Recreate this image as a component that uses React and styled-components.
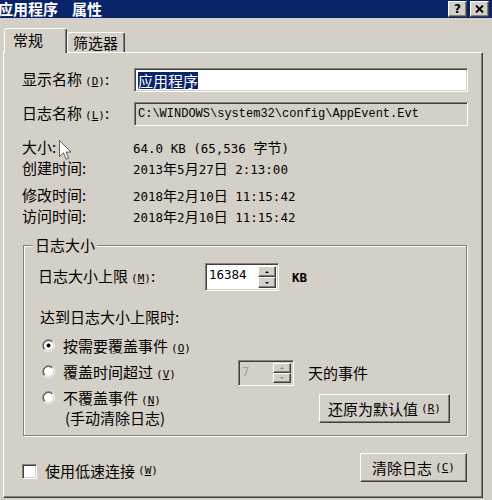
import React from 'react'
import styled, { createGlobalStyle, css } from 'styled-components'

const GlobalStyle = createGlobalStyle`
  html, body {
    margin: 0;
    padding: 0;
    background: #d4d0c8;
  }
  body {
    font-family: "Noto Sans CJK SC", sans-serif;
    font-size: 15px;
    color: #000;
  }
  * {
    box-sizing: border-box;
  }
`

const raised = css`
  border: 1px solid;
  border-color: #fff #404040 #404040 #fff;
  box-shadow: inset -1px -1px 0 #808080, inset 1px 1px 0 #d4d0c8;
  background: #d4d0c8;
`

const sunken = css`
  border: 1px solid;
  border-color: #808080 #fff #fff #808080;
  box-shadow: inset 1px 1px 0 #404040, inset -1px -1px 0 #d4d0c8;
`

const Window = styled.div`
  position: relative;
  width: 492px;
  height: 500px;
  overflow: hidden;
  background: #d4d0c8;
`

const TitleBar = styled.div`
  height: 18px;
  background: #0a246a;
  display: flex;
  align-items: center;
  justify-content: space-between;
  padding-right: 3px;
`

const Title = styled.div`
  display: flex;
  gap: 14px;
  margin-left: -2px;
  color: #fff;
  font-weight: bold;
  font-size: 15px;
  line-height: 18px;
`

const Controls = styled.div`
  display: flex;
  gap: 3px;
`

const CaptionButton = styled.div`
  ${raised}
  width: 19px;
  height: 16px;
  display: flex;
  align-items: center;
  justify-content: center;
  font: bold 12px/1 "DejaVu Sans", sans-serif;
`

const Body = styled.div`
  padding: 10px 0 0 3px;
`

const Tabs = styled.div`
  position: relative;
  z-index: 1;
  display: flex;
  align-items: flex-end;
  height: 24px;
  padding-left: 1px;
`

const Tab = styled.div`
  width: ${p => p.$w}px;
  height: ${p => (p.$active ? 25 : 20)}px;
  margin-bottom: ${p => (p.$active ? -1 : 0)}px;
  padding: ${p => (p.$active ? 1 : 0)}px 0 0 ${p => p.$pad}px;
  background: #d4d0c8;
  border: 1px solid;
  border-bottom: none;
  border-color: #fff #404040 transparent #fff;
  box-shadow: inset -1px 0 0 #808080;
  border-radius: 3px 3px 0 0;
  line-height: 20px;
`

const Panel = styled.div`
  width: 480px;
  height: 446px;
  border: 1px solid;
  border-color: #fff #404040 #404040 #fff;
  box-shadow: inset -1px -1px 0 #808080;
  padding: 15px 0 0 18px;
`

const FieldGrid = styled.div`
  display: grid;
  grid-template-columns: 112px 334px;
  grid-auto-rows: 24px;
  row-gap: 10px;
  align-items: center;
`

const Label = styled.div`
  line-height: 20px;
  white-space: nowrap;
`

const Lat = styled.span`
  font-family: "DejaVu Sans Mono", monospace;
  font-size: 11px;
  margin-left: 3px;
`

const TextBox = styled.div`
  ${sunken}
  height: 24px;
  background: ${p => (p.$readOnly ? '#d4d0c8' : '#fff')};
  padding: 0 3px;
  display: flex;
  align-items: center;
`

const Selected = styled.span`
  background: #0a246a;
  color: #fff;
  line-height: 17px;
`

const Path = styled.span`
  font-family: "Liberation Mono", monospace;
  font-size: 12px;
  line-height: 17px;
`

const InfoList = styled.div`
  margin-top: 10px;
  display: flex;
  flex-direction: column;
  gap: 6px;
`

const InfoGroup = styled.div`
  display: grid;
  grid-template-columns: 111px auto;
  grid-auto-rows: 21px;
  align-items: center;
`

const Value = styled.span`
  font-family: "DejaVu Sans Mono", "Noto Sans CJK SC", monospace;
  font-size: 12.5px;
  white-space: pre;
`

const Wide = styled.span`
  font-family: "Noto Sans CJK SC", sans-serif;
  font-size: 14px;
`

const Group = styled.div`
  position: relative;
  width: 444px;
  margin: 19px 0 0 1px;
  padding: 17px 16px 12px 14px;
  border: 1px solid #808080;
  box-shadow: inset 1px 1px 0 #fff, 1px 1px 0 #fff;
`

const GroupTitle = styled.span`
  position: absolute;
  top: -10px;
  left: 9px;
  padding: 0 2px;
  background: #d4d0c8;
  line-height: 18px;
`

const SizeRow = styled.div`
  display: flex;
  align-items: center;
  height: 28px;
`

const SizeLabel = styled.div`
  width: 167px;
  line-height: 20px;
`

const Spin = styled.div`
  ${sunken}
  display: flex;
  width: ${p => p.$w}px;
  height: ${p => p.$h}px;
  padding: 2px;
  background: ${p => (p.$disabled ? '#d4d0c8' : '#fff')};
`

const SpinText = styled.div`
  flex: 1;
  padding: 1px 0 0 1px;
  font-family: "DejaVu Sans Mono", monospace;
  font-size: 12.5px;
  line-height: 16px;
  color: ${p => (p.$disabled ? '#a0a0a0' : '#000')};
`

const SpinButtons = styled.div`
  display: flex;
  flex-direction: column;
  width: 18px;
`

const SpinButton = styled.div`
  ${raised}
  flex: 1;
  display: flex;
  align-items: center;
  justify-content: center;
`

const Arrow = styled.span`
  width: 0;
  height: 0;
  border-left: 2px solid transparent;
  border-right: 2px solid transparent;
  ${p => (p.$down ? 'border-top' : 'border-bottom')}: 2px solid ${p => (p.$disabled ? '#808080' : '#000')};
`

const Unit = styled(Value)`
  margin-left: 13px;
  font-weight: bold;
`

const Prompt = styled.div`
  margin: 16px 0 0 2px;
  line-height: 20px;
`

const RadioGrid = styled.div`
  display: grid;
  grid-template-columns: 196px 1fr;
  grid-template-rows: 20px 26px 34px;
  row-gap: 3px;
  margin-top: 10px;
  padding-left: 4px;
  align-items: center;
`

const RadioItem = styled.div`
  display: flex;
  align-items: flex-start;
  align-self: ${p => (p.$top ? 'start' : 'center')};
  line-height: 17px;

  svg {
    flex: none;
    margin: 2px 8px 0 0;
  }
`

const SubLine = styled.span`
  display: block;
  margin-left: 2px;
`

const DaysCell = styled.div`
  display: flex;
  align-items: center;
`

const DaysText = styled.span`
  margin-left: 14px;
  line-height: 20px;
`

const Button = styled.div`
  ${raised}
  width: ${p => p.$w}px;
  height: 29px;
  display: flex;
  align-items: center;
  justify-content: center;
  line-height: 20px;
  justify-self: end;
  align-self: end;
`

const BottomRow = styled.div`
  width: 445px;
  margin-top: 17px;
  display: flex;
  align-items: center;
  justify-content: space-between;
`

const CheckRow = styled.div`
  display: flex;
  align-items: center;
  margin-top: 7px;
  line-height: 20px;
`

const CheckBox = styled.span`
  ${sunken}
  width: 15px;
  height: 15px;
  margin-right: 8px;
  background: #fff;
`

const Cursor = styled.svg`
  position: absolute;
  left: 59px;
  top: 140px;
`

const Key = ({ k }) => (
  <Lat>
    (<u>{k}</u>)
  </Lat>
)

const Radio = ({ checked }) => (
  <svg width="13" height="13" viewBox="0 0 13 13">
    <circle cx="6.5" cy="6.5" r="5" fill="#fff" />
    <path d="M2.26 10.74 A6 6 0 0 1 10.74 2.26" fill="none" stroke="#808080" />
    <path d="M10.74 2.26 A6 6 0 0 1 2.26 10.74" fill="none" stroke="#fff" />
    <path d="M2.96 10.04 A5 5 0 0 1 10.04 2.96" fill="none" stroke="#404040" />
    <path d="M10.04 2.96 A5 5 0 0 1 2.96 10.04" fill="none" stroke="#d4d0c8" />
    {checked && <circle cx="6.5" cy="6.5" r="2" fill="#000" />}
  </svg>
)

const SpinBox = ({ value, w, h, disabled }) => (
  <Spin $w={w} $h={h} $disabled={disabled}>
    <SpinText $disabled={disabled}>{value}</SpinText>
    <SpinButtons>
      <SpinButton>
        <Arrow $disabled={disabled} />
      </SpinButton>
      <SpinButton>
        <Arrow $down $disabled={disabled} />
      </SpinButton>
    </SpinButtons>
  </Spin>
)

export default function App() {
  return (
    <Window>
      <GlobalStyle />
      <TitleBar>
        <Title>
          <span>应用程序</span>
          <span>属性</span>
        </Title>
        <Controls>
          <CaptionButton>?</CaptionButton>
          <CaptionButton>
            <svg width="9" height="8" viewBox="0 0 9 8">
              <path d="M1 0.5 L8 7.5 M8 0.5 L1 7.5" stroke="#000" strokeWidth="1.8" />
            </svg>
          </CaptionButton>
        </Controls>
      </TitleBar>

      <Body>
        <Tabs>
          <Tab $active $w={63} $pad={8}>常规</Tab>
          <Tab $w={58} $pad={5}>筛选器</Tab>
        </Tabs>

        <Panel>
          <FieldGrid>
            <Label>
              显示名称<Key k="D" />:
            </Label>
            <TextBox>
              <Selected>应用程序</Selected>
            </TextBox>
            <Label>
              日志名称<Key k="L" />:
            </Label>
            <TextBox $readOnly>
              <Path>C:\WINDOWS\system32\config\AppEvent.Evt</Path>
            </TextBox>
          </FieldGrid>

          <InfoList>
            <InfoGroup>
              <Label>大小:</Label>
              <Value>
                64.0 KB (65,536 <Wide>字节</Wide>)
              </Value>
              <Label>创建时间:</Label>
              <Value>
                2013<Wide>年</Wide>5<Wide>月</Wide>27<Wide>日</Wide> 2:13:00
              </Value>
            </InfoGroup>
            <InfoGroup>
              <Label>修改时间:</Label>
              <Value>
                2018<Wide>年</Wide>2<Wide>月</Wide>10<Wide>日</Wide> 11:15:42
              </Value>
              <Label>访问时间:</Label>
              <Value>
                2018<Wide>年</Wide>2<Wide>月</Wide>10<Wide>日</Wide> 11:15:42
              </Value>
            </InfoGroup>
          </InfoList>

          <Group>
            <GroupTitle>日志大小</GroupTitle>
            <SizeRow>
              <SizeLabel>
                日志大小上限<Key k="M" />:
              </SizeLabel>
              <SpinBox value="16384" w={74} h={28} />
              <Unit>KB</Unit>
            </SizeRow>

            <Prompt>达到日志大小上限时:</Prompt>

            <RadioGrid>
              <RadioItem>
                <Radio checked />
                <span>
                  按需要覆盖事件<Key k="O" />
                </span>
              </RadioItem>
              <span />
              <RadioItem>
                <Radio />
                <span>
                  覆盖时间超过<Key k="V" />
                </span>
              </RadioItem>
              <DaysCell>
                <SpinBox value="7" w={56} h={26} disabled />
                <DaysText>天的事件</DaysText>
              </DaysCell>
              <RadioItem $top>
                <Radio />
                <span>
                  不覆盖事件<Key k="N" />
                  <SubLine>(手动清除日志)</SubLine>
                </span>
              </RadioItem>
              <Button $w={131}>
                还原为默认值<Key k="R" />
              </Button>
            </RadioGrid>
          </Group>

          <BottomRow>
            <CheckRow>
              <CheckBox />
              使用低速连接<Key k="W" />
            </CheckRow>
            <Button $w={107}>
              清除日志<Key k="C" />
            </Button>
          </BottomRow>
        </Panel>
      </Body>

      <Cursor width="13" height="21" viewBox="0 0 13 21">
        <path
          d="M0.5 0.5 L0.5 16.5 L4.5 12.8 L7.2 19.2 L9.6 18.2 L7 12 L12 12 Z"
          fill="#fff"
          stroke="#000"
          strokeOpacity="0.6"
        />
      </Cursor>
    </Window>
  )
}
